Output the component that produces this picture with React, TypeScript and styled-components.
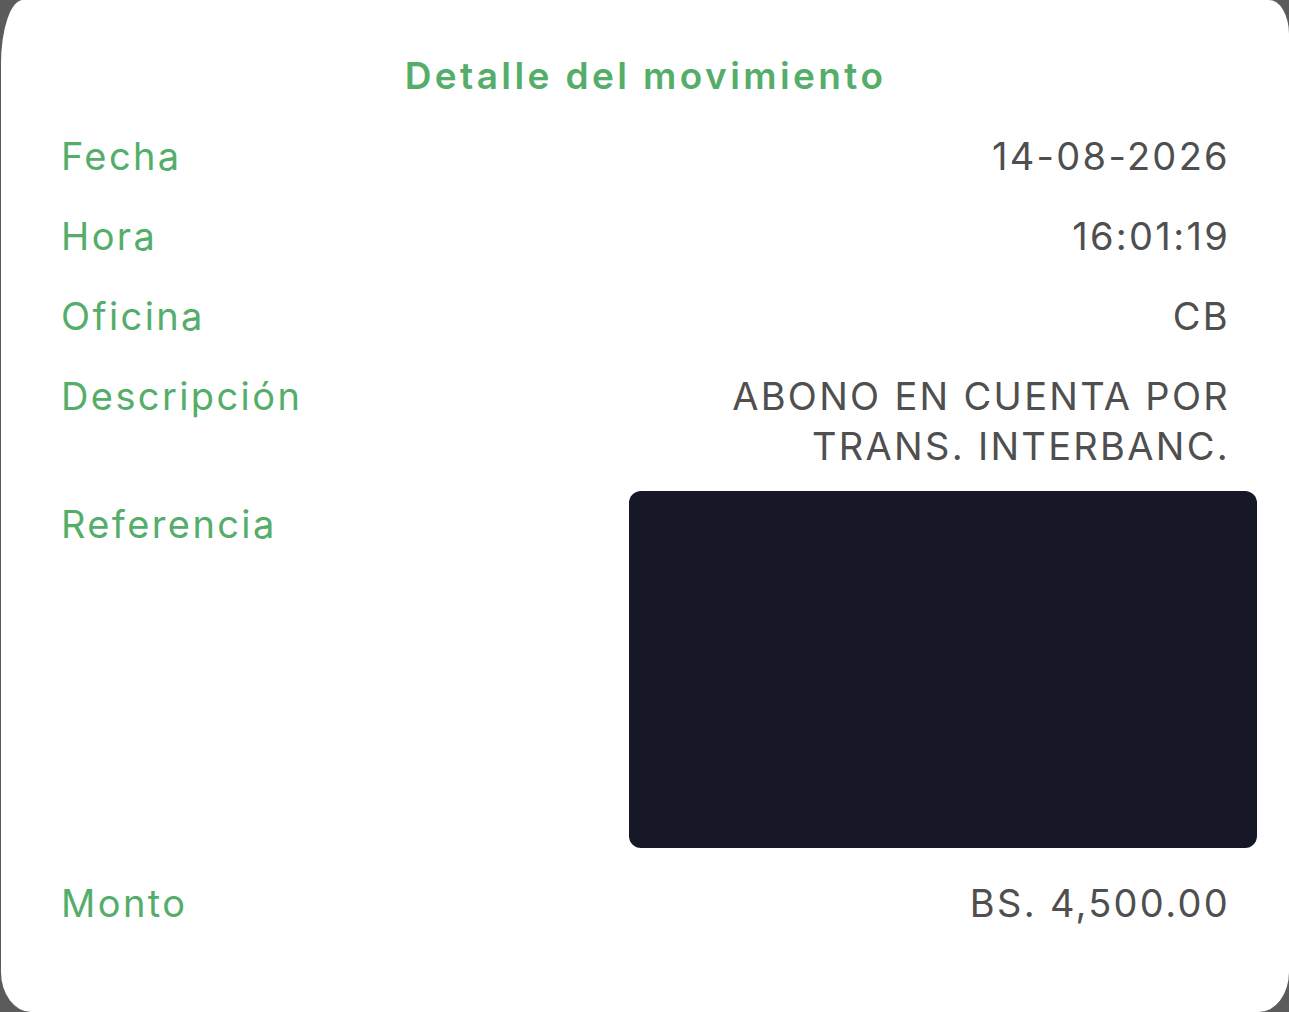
import styled, { createGlobalStyle } from "styled-components";

const GlobalStyle = createGlobalStyle`
  html, body {
    margin: 0;
    padding: 0;
    background: #5b5b5b;
  }
  body {
    font-family: Inter, "Open Sans", "Liberation Sans", sans-serif;
    -webkit-font-smoothing: antialiased;
  }
`;

const Page = styled.div`
  width: 1289px;
  height: 1012px;
  overflow: hidden;
  background: #5b5b5b;
`;

const Card = styled.div`
  box-sizing: border-box;
  margin-left: 1px;
  width: 1288px;
  height: 1012px;
  background: #ffffff;
  border-radius: 22px 20px 30px 30px / 64px 34px 40px 40px;
  padding: 51px 59px 0 60px;
  display: flex;
  flex-direction: column;
  gap: 30px;
`;

const Title = styled.h1`
  margin: 0;
  text-align: center;
  font-size: 37px;
  line-height: 50px;
  font-weight: 600;
  letter-spacing: 3.4px;
  color: #55ad6a;
`;

const Row = styled.div<{ $tight?: boolean }>`
  display: flex;
  justify-content: space-between;
  align-items: flex-start;
  margin-top: ${(p) => (p.$tight ? "-10px" : "0")};
`;

const Label = styled.span<{ $offset?: number }>`
  font-size: 38px;
  line-height: 50px;
  letter-spacing: 2.4px;
  color: #55ad6a;
  padding-top: ${(p) => p.$offset ?? 0}px;
`;

const Value = styled.span`
  font-size: 38px;
  line-height: 50px;
  letter-spacing: 2.3px;
  color: #4f4f4f;
  text-align: right;
  white-space: pre-line;
`;

const Redacted = styled.div`
  width: 628px;
  height: 357px;
  margin-right: -27px;
  background: #161827;
  border-radius: 12px;
`;

const rows = [
  { label: "Fecha", value: "14-08-2026" },
  { label: "Hora", value: "16:01:19" },
  { label: "Oficina", value: "CB" },
  { label: "Descripción", value: "ABONO EN CUENTA POR\nTRANS. INTERBANC." },
];

export default function App() {
  return (
    <>
      <GlobalStyle />
      <Page>
        <Card>
          <Title>Detalle del movimiento</Title>
          {rows.map((r) => (
            <Row key={r.label}>
              <Label>{r.label}</Label>
              <Value>{r.value}</Value>
            </Row>
          ))}
          <Row $tight>
            <Label $offset={8}>Referencia</Label>
            <Redacted />
          </Row>
          <Row>
            <Label>Monto</Label>
            <Value>BS. 4,500.00</Value>
          </Row>
        </Card>
      </Page>
    </>
  );
}
